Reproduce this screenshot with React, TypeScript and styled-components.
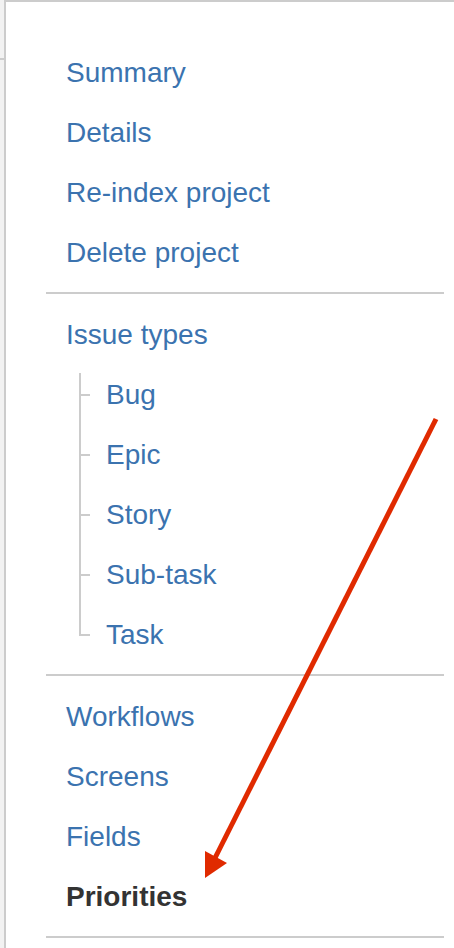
import React from 'react';
import styled, { createGlobalStyle } from 'styled-components';

const colors = {
  link: '#3b73af',
  text: '#333333',
  border: '#cccccc',
  gutter: '#f2f2f2',
  arrow: '#e02a00',
};

const GlobalStyle = createGlobalStyle`
  html, body {
    margin: 0;
    padding: 0;
    background: #fff;
  }
  body {
    font-family: 'Liberation Sans', Arial, sans-serif;
  }
`;

const Page = styled.div`
  position: relative;
  display: flex;
  width: 454px;
  height: 948px;
  overflow: hidden;
`;

const Gutter = styled.div`
  width: 4px;
  flex-shrink: 0;
  background: ${colors.gutter};
  padding-top: 58px;
  box-sizing: border-box;
`;

const GutterRule = styled.div`
  height: 2px;
  background: ${colors.border};
`;

const Panel = styled.div`
  flex: 1;
  border-left: 2px solid ${colors.border};
  border-top: 2px solid ${colors.border};
  padding: 41px 10px 0 40px;
`;

const Nav = styled.ul`
  list-style: none;
  margin: 0;
  padding: 0;
`;

const Item = styled.li<{ $active?: boolean }>`
  height: 60px;
  line-height: 60px;
  padding-left: 20px;
  font-size: 28px;
  color: ${(p) => (p.$active ? colors.text : colors.link)};
  font-weight: ${(p) => (p.$active ? 700 : 400)};
  white-space: nowrap;
`;

const Separator = styled.li`
  height: 2px;
  margin: 9px 0 11px;
  background: ${colors.border};
`;

const SubList = styled.ul`
  position: relative;
  list-style: none;
  margin: 0 0 0 33px;
  padding: 0;

  &::before {
    content: '';
    position: absolute;
    left: 0;
    top: 8px;
    bottom: 30px;
    width: 2px;
    background: ${colors.border};
  }
`;

const SubItem = styled.li`
  position: relative;
  height: 60px;
  line-height: 60px;
  padding-left: 27px;
  font-size: 28px;
  color: ${colors.link};

  &::before {
    content: '';
    position: absolute;
    left: 0;
    top: 29px;
    width: 11px;
    height: 2px;
    background: ${colors.border};
  }
`;

const ArrowLayer = styled.svg`
  position: absolute;
  left: 0;
  top: 0;
  pointer-events: none;
`;

const topLinks = ['Summary', 'Details', 'Re-index project', 'Delete project'];
const issueTypes = ['Bug', 'Epic', 'Story', 'Sub-task', 'Task'];
const schemeLinks = ['Workflows', 'Screens', 'Fields'];

export default function App() {
  return (
    <Page>
      <GlobalStyle />
      <Gutter>
        <GutterRule />
      </Gutter>
      <Panel>
        <Nav>
          {topLinks.map((l) => (
            <Item key={l}>{l}</Item>
          ))}
          <Separator />
          <Item>Issue types</Item>
          <li>
            <SubList>
              {issueTypes.map((t) => (
                <SubItem key={t}>{t}</SubItem>
              ))}
            </SubList>
          </li>
          <Separator />
          {schemeLinks.map((l) => (
            <Item key={l}>{l}</Item>
          ))}
          <Item $active>Priorities</Item>
          <Separator />
        </Nav>
      </Panel>
      <ArrowLayer width="454" height="948" viewBox="0 0 454 948">
        <line x1="436" y1="419" x2="215" y2="858" stroke={colors.arrow} strokeWidth="5" />
        <polygon points="205,878 205,851 227,863" fill={colors.arrow} />
      </ArrowLayer>
    </Page>
  );
}
